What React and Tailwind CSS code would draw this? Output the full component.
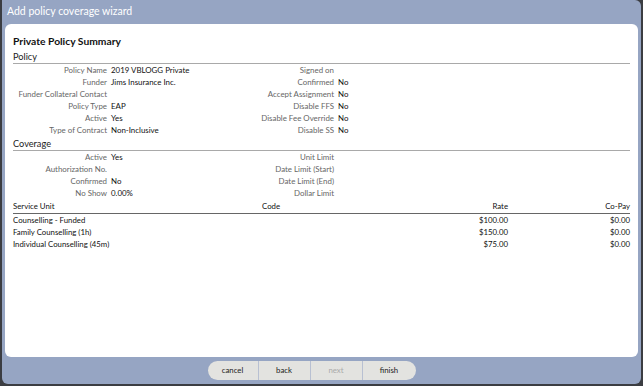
const policyLeft = [
  ["Policy Name", "2019 VBLOGG Private"],
  ["Funder", "Jims Insurance Inc."],
  ["Funder Collateral Contact", ""],
  ["Policy Type", "EAP"],
  ["Active", "Yes"],
  ["Type of Contract", "Non-Inclusive"],
];

const policyRight = [
  ["Signed on", ""],
  ["Confirmed", "No"],
  ["Accept Assignment", "No"],
  ["Disable FFS", "No"],
  ["Disable Fee Override", "No"],
  ["Disable SS", "No"],
];

const coverageLeft = [
  ["Active", "Yes"],
  ["Authorization No.", ""],
  ["Confirmed", "No"],
  ["No Show", "0.00%"],
];

const coverageRight = [
  ["Unit Limit", ""],
  ["Date Limit (Start)", ""],
  ["Date Limit (End)", ""],
  ["Dollar Limit", ""],
];

const services = [
  ["Counselling - Funded", "", "$100.00", "$0.00"],
  ["Family Counselling (1h)", "", "$150.00", "$0.00"],
  ["Individual Counselling (45m)", "", "$75.00", "$0.00"],
];

function Field({ label, value }) {
  return (
    <div className="flex h-[12px] items-center">
      <span className="w-[94px] shrink-0 whitespace-nowrap text-right text-[#666]">{label}</span>
      <span className="pl-[4px] text-[#111]">{value}</span>
    </div>
  );
}

function Section({ title, left, right }) {
  return (
    <div>
      <div className="border-b border-[#a9a9a9] text-[9.2px] leading-[13px] text-[#222]">{title}</div>
      <div className="flex pt-[1px] text-[7.9px]">
        <div className="w-[227px]">
          {left.map(([l, v]) => (
            <Field key={l} label={l} value={v} />
          ))}
        </div>
        <div>
          {right.map(([l, v]) => (
            <Field key={l} label={l} value={v} />
          ))}
        </div>
      </div>
    </div>
  );
}

export default function App() {
  return (
    <div className="h-[386px] w-[643px] bg-[#3b3d42] pl-[2px]" style={{ fontFamily: "Lato, 'Open Sans', sans-serif" }}>
      <div className="flex h-[384px] w-[639px] flex-col rounded-b-[6px] rounded-tr-[6px] bg-[#96a5c3]">
        <div className="flex h-[24px] items-center px-[5px] text-[10.5px] text-white">Add policy coverage wizard</div>

        <div className="mx-[3px] flex-1 rounded-[6px] bg-white px-[8px] pt-[10px]">
          <div className="text-[10.3px] font-bold leading-[14px] text-[#111]">Private Policy Summary</div>
          <div className="mt-[2px]">
            <Section title="Policy" left={policyLeft} right={policyRight} />
          </div>
          <Section title="Coverage" left={coverageLeft} right={coverageRight} />

          <table className="mt-[1px] w-full text-[7.8px] text-[#111]">
            <thead>
              <tr className="h-[12px] border-b-[1.5px] border-[#666]">
                <th className="w-[249px] text-left font-normal">Service Unit</th>
                <th className="text-left font-normal">Code</th>
                <th className="text-right font-normal">Rate</th>
                <th className="w-[122px] text-right font-normal">Co-Pay</th>
              </tr>
            </thead>
            <tbody>
              <tr className="h-[2px]" />
              {services.map(([name, code, rate, copay]) => (
                <tr key={name} className="h-[11.6px]">
                  <td>{name}</td>
                  <td>{code}</td>
                  <td className="text-right">{rate}</td>
                  <td className="text-right">{copay}</td>
                </tr>
              ))}
            </tbody>
          </table>
        </div>

        <div className="flex h-[27px] items-center justify-center pr-[20px]">
          <div className="flex h-[19px] overflow-hidden rounded-full bg-[#e3e3e0] text-[7.8px]">
            <button className="w-[51px] border-r border-[#b8c0d2] text-[#222]">cancel</button>
            <button className="w-[52px] border-r border-[#b8c0d2] text-[#222]">back</button>
            <button className="w-[52px] border-r border-[#b8c0d2] text-[#aaa]">next</button>
            <button className="w-[53px] text-[#222]">finish</button>
          </div>
        </div>
      </div>
    </div>
  );
}
